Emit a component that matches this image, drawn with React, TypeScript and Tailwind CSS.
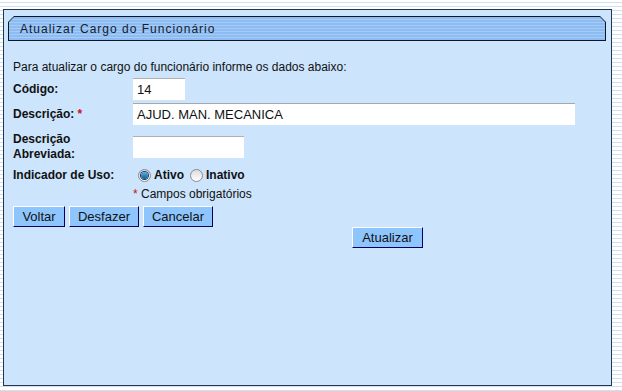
import React from 'react';

const font = { fontFamily: '"Liberation Sans", Arial, sans-serif' };

function Radio({ checked, label }: { checked?: boolean; label: string }) {
  return (
    <label className="flex items-center gap-[3px] font-bold text-[12px] text-[#111]">
      <span className="flex h-[13px] w-[13px] items-center justify-center rounded-full border border-[#8a8a8a] bg-gradient-to-b from-[#dcdcdc] to-[#ffffff]">
        {checked && <span className="h-[7px] w-[7px] rounded-full bg-gradient-to-b from-[#5fb0e8] to-[#145a8c] ring-1 ring-[#0d3f66]" />}
      </span>
      {label}
    </label>
  );
}

function Btn({ children, w }: { children: React.ReactNode; w: string }) {
  return (
    <button
      className={`h-[21px] ${w} border border-t-white border-l-white border-r-[#000060] border-b-[#000060] bg-[#8fc5fd] text-[13px] leading-none text-[#111]`}
    >
      {children}
    </button>
  );
}

export default function App() {
  return (
    <div
      className="h-[391px] w-[622px] overflow-hidden pt-[9px] pl-[3px] bg-[repeating-linear-gradient(to_bottom,#ffffff_0px,#ffffff_2px,#cfe0ee_2px,#cfe0ee_3px,#ffffff_3px,#ffffff_4px)]"
      style={font}
    >
      <div className="h-[377px] w-[609px] border border-[#24354f] bg-[#cce4fc] pt-[6px] pl-[4px]">
        {/* title bar */}
        <div className="relative h-[25px] w-[598px] bg-[#0c1626] [clip-path:polygon(6px_0,calc(100%-6px)_0,100%_6px,100%_100%,0_100%,0_6px)]">
          <div className="absolute inset-[1px] flex items-center pl-[11px] bg-[repeating-linear-gradient(to_bottom,#8cbcf2_0px,#8cbcf2_2px,#a6cbf6_2px,#a6cbf6_3px)] [clip-path:polygon(5px_0,calc(100%-5px)_0,100%_5px,100%_100%,0_100%,0_5px)]">
            <span className="text-[12px] tracking-[1px] text-[#15202e]">Atualizar Cargo do Funcionário</span>
          </div>
        </div>

        <div className="pl-[5px] pt-[19px] text-[12px] text-[#111]">
          <p className="leading-[14px]">Para atualizar o cargo do funcionário informe os dados abaixo:</p>

          <div className="mt-[4px] grid grid-cols-[120px_1fr] gap-y-[3px] items-center">
            <span className="font-bold">Código:</span>
            <div className="h-[22px] w-[52px] bg-white border-t border-[#b0b0b0] px-[4px] text-[13px] leading-[21px]">14</div>

            <span className="font-bold">
              Descrição:<span className="ml-[3px] text-[#d01010]">*</span>
            </span>
            <div className="h-[22px] w-[442px] bg-white border-t border-[#a8a8a8] px-[4px] text-[13px] leading-[21px]">AJUD. MAN. MECANICA</div>

            <span className="mt-[4px] font-bold leading-[15px]">
              Descrição
              <br />
              Abreviada:
            </span>
            <div className="mt-[4px] h-[22px] w-[111px] bg-white border-t border-[#b0b0b0]" />

            <span className="mt-[1px] font-bold">Indicador de Uso:</span>
            <div className="mt-[1px] flex items-center gap-[6px] pl-[5px]">
              <Radio checked label="Ativo" />
              <Radio label="Inativo" />
            </div>

            <span />
            <span className="-mt-[2px]">
              <span className="text-[#d01010]">*</span> Campos obrigatórios
            </span>
          </div>

          <div className="mt-[3px] flex gap-[4px]">
            <Btn w="w-[52px]">Voltar</Btn>
            <Btn w="w-[70px]">Desfazer</Btn>
            <Btn w="w-[70px]">Cancelar</Btn>
          </div>
          <div className="flex pl-[339px]">
            <Btn w="w-[71px]">Atualizar</Btn>
          </div>
        </div>
      </div>
    </div>
  );
}
